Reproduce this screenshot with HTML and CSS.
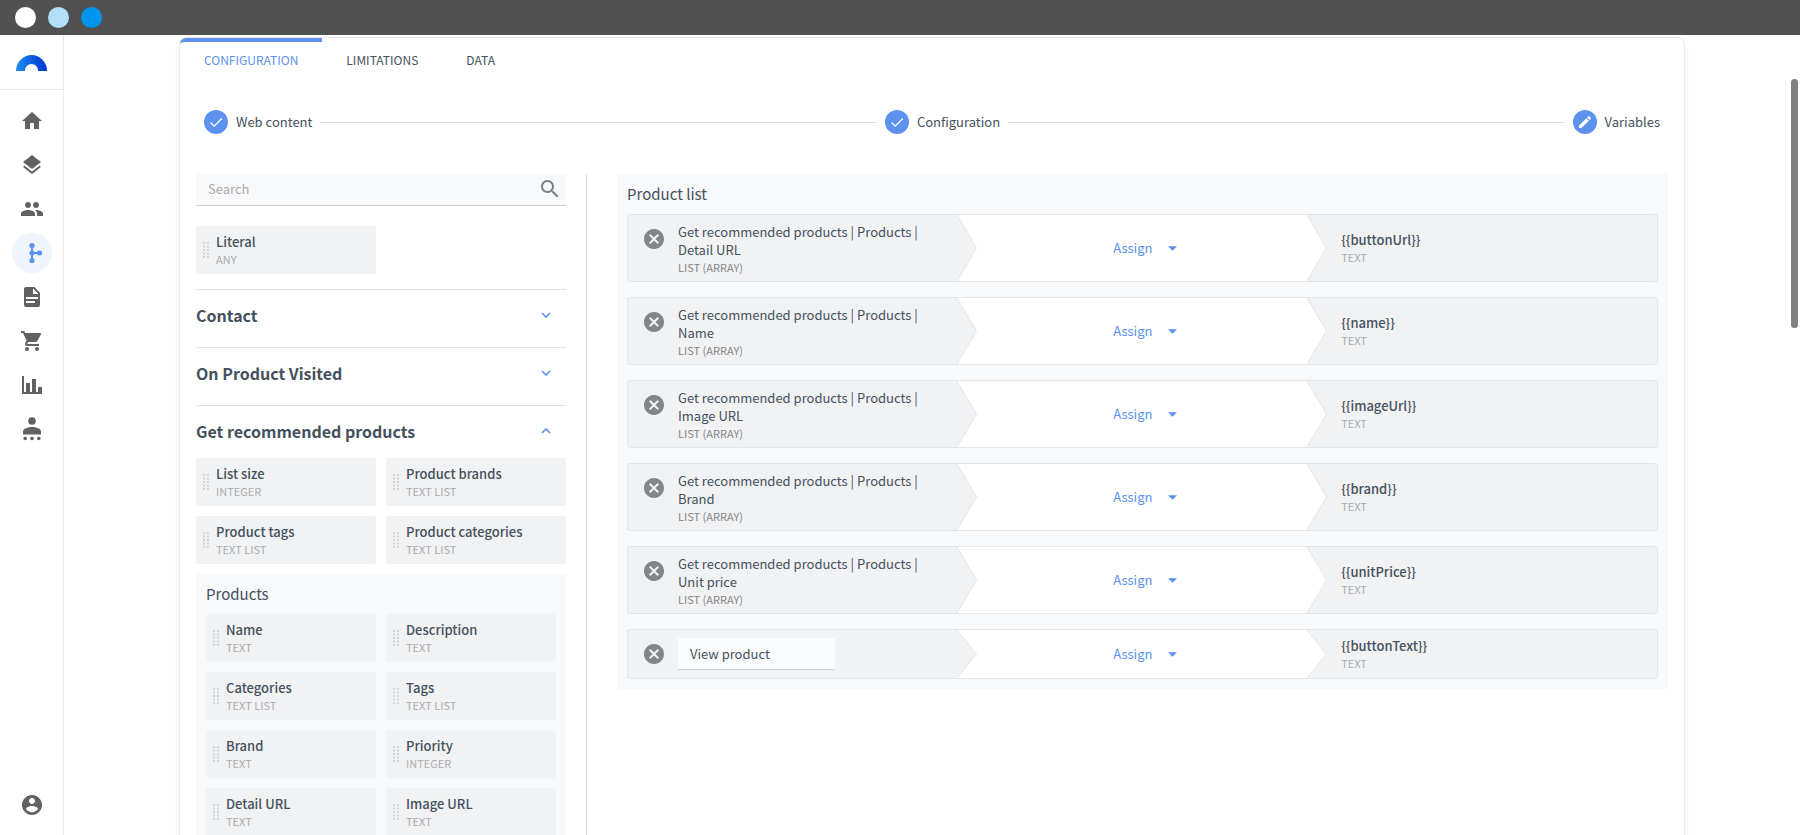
FILE: index.html
```html
<!DOCTYPE html>
<html lang="en">
<head>
    <meta charset="UTF-8">
    <meta name="viewport" content="width=device-width, initial-scale=1.0">
    <title>Configuration - Variables</title>
    <link rel="stylesheet" href="styles.css">
</head>
<body>
    <!-- shared icons -->
    <svg class="sprite" aria-hidden="true">
        <symbol id="grip" viewBox="0 0 6 16">
            <path d="M0 0h2v2H0zM4 0h2v2H4zM0 3.5h2v2H0zM4 3.5h2v2H4zM0 7h2v2H0zM4 7h2v2H4zM0 10.500h2v2H0zM4 10.500h2v2H4zM0 14h2v2H0zM4 14h2v2H4z"/>
        </symbol>
        <symbol id="remove" viewBox="2 2 20 20">
            <path d="M12 2C6.470 2 2 6.470 2 12s4.470 10 10 10 10-4.470 10-10S17.530 2 12 2zm5 13.590L15.590 17 12 13.410 8.410 17 7 15.590 10.590 12 7 8.410 8.410 7 12 10.590 15.590 7 17 8.410 13.410 12 17 15.590z"/>
        </symbol>
        <symbol id="check" viewBox="0 0 24 24">
            <path d="M6.500 12.500l3.700 3.700 7.600-7.700" fill="none" stroke="#fff" stroke-width="1.300"/>
        </symbol>
        <symbol id="arrow" viewBox="0 0 20 100" preserveAspectRatio="none">
            <path d="M0 0L19.500 50 0 100" stroke="#e3e5e7" vector-effect="non-scaling-stroke"/>
        </symbol>
        <symbol id="chevron" viewBox="0 0 10 6">
            <path d="M1 1l4 4 4-4" fill="none" stroke="#5c91ee" stroke-width="1.600"/>
        </symbol>
    </svg>

    <header class="topbar">
        <span class="dot dot-white"></span>
        <span class="dot dot-light"></span>
        <span class="dot dot-blue"></span>
    </header>

    <div class="app">
        <nav class="sidebar">
            <a href="#" class="logo" aria-label="Dashboard">
                <svg viewBox="0 0 31 16" width="31" height="16">
                    <defs>
                        <linearGradient id="logoFill">
                            <stop offset="0" stop-color="#1f8fe8"/>
                            <stop offset="0.750" stop-color="#0646dd"/>
                            <stop offset="1" stop-color="#0038dc"/>
                        </linearGradient>
                    </defs>
                    <path fill="url(#logoFill)" d="M0 16a15.500 16 0 0 1 31 0h-8.800a6.700 7 0 0 0-13.400 0z"/>
                </svg>
            </a>
            <div class="nav-items">
                <a href="#" class="nav-link" aria-label="Home"><svg viewBox="0 0 24 24"><path d="M10 20v-6h4v6h5v-8h3L12 3 2 12h3v8z"/></svg></a>
                <a href="#" class="nav-link" aria-label="Layers"><svg viewBox="0 0 24 24"><path d="M11.990 18.540l-7.370-5.730L3 14.070l9 7 9-7-1.630-1.270-7.380 5.740zM12 16l7.360-5.730L21 9l-9-7-9 7 1.630 1.270L12 16z"/></svg></a>
                <a href="#" class="nav-link" aria-label="Contacts"><svg viewBox="0 0 24 24"><path d="M16 11c1.660 0 2.990-1.340 2.990-3S17.660 5 16 5s-3 1.340-3 3 1.340 3 3 3zm-8 0c1.660 0 2.990-1.340 2.990-3S9.660 5 8 5 5 6.340 5 8s1.340 3 3 3zm0 2c-2.330 0-7 1.170-7 3.500V19h14v-2.500C15 14.170 10.330 13 8 13zm8 0c-.290 0-.620.020-.970.050C16.190 13.890 17 15.020 17 16.500V19h6v-2.500c0-2.330-4.670-3.500-7-3.500z"/></svg></a>
                <a href="#" class="nav-link active" aria-label="Workflows"><svg viewBox="0 0 24 24"><circle cx="12" cy="4.500" r="2.600"/><circle cx="12" cy="12" r="2.600"/><circle cx="12" cy="19.500" r="2.600"/><circle cx="19.500" cy="12" r="2.600"/><path d="M11 4h2v7h6v2h-6v7h-2z"/></svg></a>
                <a href="#" class="nav-link" aria-label="Templates"><svg viewBox="0 0 24 24"><path fill-rule="evenodd" d="M6 2h8.500L20 8v12a2 2 0 0 1-2 2H6a2 2 0 0 1-2-2V4a2 2 0 0 1 2-2zm7 1.500V9h5.500zM6 12v2h12v-2zm0 4v2h9v-2z"/></svg></a>
                <a href="#" class="nav-link" aria-label="Orders"><svg viewBox="0 0 24 24"><path d="M7 18c-1.100 0-1.990.900-1.990 2S5.900 22 7 22s2-.900 2-2-.900-2-2-2zM1 2v2h2l3.600 7.590-1.350 2.450c-.160.280-.250.610-.250.960 0 1.100.900 2 2 2h12v-2H7.420c-.140 0-.250-.110-.250-.250l.030-.120.900-1.630h7.450c.750 0 1.410-.410 1.750-1.030l3.580-6.490A1 1 0 0 0 20 4H5.210l-.940-2H1zm16 16c-1.100 0-1.990.900-1.990 2s.890 2 1.990 2 2-.900 2-2-.900-2-2-2z"/></svg></a>
                <a href="#" class="nav-link" aria-label="Reports"><svg viewBox="0 0 24 24"><path d="M2 3h2v16h2v-9h4v9h2V6h4v13h2v-5h4v7H2z"/></svg></a>
                <a href="#" class="nav-link" aria-label="Audience"><svg viewBox="0 0 24 24"><circle cx="12" cy="4" r="3.800"/><path d="M3 17.500v-2.800C3 11.500 8 10 12 10s9 1.500 9 4.700v2.800z"/><circle cx="5.200" cy="21.500" r="1.800"/><circle cx="12" cy="21.500" r="1.800"/><circle cx="18.800" cy="21.500" r="1.800"/></svg></a>
            </div>
            <a href="#" class="nav-link account" aria-label="Account"><svg viewBox="0 0 24 24"><path d="M12 2C6.480 2 2 6.480 2 12s4.480 10 10 10 10-4.480 10-10S17.520 2 12 2zm0 3c1.660 0 3 1.340 3 3s-1.340 3-3 3-3-1.340-3-3 1.340-3 3-3zm0 14.200c-2.500 0-4.710-1.280-6-3.220.030-1.990 4-3.080 6-3.080 1.990 0 5.970 1.090 6 3.080-1.290 1.940-3.500 3.220-6 3.220z"/></svg></a>
        </nav>

        <main class="main">
            <div class="card">
                <div class="tabs">
                    <a href="#" class="tab active">CONFIGURATION</a>
                    <a href="#" class="tab">LIMITATIONS</a>
                    <a href="#" class="tab">DATA</a>
                </div>

                <div class="stepper">
                    <div class="step">
                        <span class="step-icon"><svg><use href="#check"/></svg></span>
                        <span>Web content</span>
                    </div>
                    <div class="step-line"></div>
                    <div class="step">
                        <span class="step-icon"><svg><use href="#check"/></svg></span>
                        <span>Configuration</span>
                    </div>
                    <div class="step-line"></div>
                    <div class="step">
                        <span class="step-icon"><svg class="pencil" viewBox="0 0 24 24"><path d="M3 17.250V21h3.750L17.810 9.940l-3.750-3.750L3 17.250zM20.710 7.040c.390-.390.390-1.020 0-1.410l-2.340-2.340c-.390-.390-1.020-.390-1.410 0l-1.830 1.830 3.750 3.750 1.830-1.830z"/></svg></span>
                        <span>Variables</span>
                    </div>
                </div>

                <div class="content">
                    <aside class="sources">
                        <div class="search">
                            <input type="text" placeholder="Search" aria-label="Search">
                            <svg viewBox="0 0 24 24"><path d="M15.500 14h-.790l-.280-.270C15.410 12.590 16 11.110 16 9.500 16 5.910 13.090 3 9.500 3S3 5.910 3 9.500 5.910 16 9.500 16c1.610 0 3.090-.590 4.230-1.570l.270.280v.790l5 4.990L20.490 19l-4.990-5zm-6 0C7.010 14 5 11.990 5 9.500S7.010 5 9.500 5 14 7.010 14 9.500 11.990 14 9.500 14z"/></svg>
                        </div>

                        <div class="chips literal">
                            <div class="chip"><svg><use href="#grip"/></svg><div><strong>Literal</strong><small>ANY</small></div></div>
                        </div>

                        <section class="group">
                            <button type="button" class="group-header">Contact <svg><use href="#chevron"/></svg></button>
                        </section>
                        <section class="group">
                            <button type="button" class="group-header">On Product Visited <svg><use href="#chevron"/></svg></button>
                        </section>
                        <section class="group open">
                            <button type="button" class="group-header">Get recommended products <svg><use href="#chevron"/></svg></button>
                            <div class="chips">
                                <div class="chip"><svg><use href="#grip"/></svg><div><strong>List size</strong><small>INTEGER</small></div></div>
                                <div class="chip"><svg><use href="#grip"/></svg><div><strong>Product brands</strong><small>TEXT LIST</small></div></div>
                                <div class="chip"><svg><use href="#grip"/></svg><div><strong>Product tags</strong><small>TEXT LIST</small></div></div>
                                <div class="chip"><svg><use href="#grip"/></svg><div><strong>Product categories</strong><small>TEXT LIST</small></div></div>
                            </div>
                            <div class="subgroup">
                                <h3>Products</h3>
                                <div class="chips">
                                    <div class="chip"><svg><use href="#grip"/></svg><div><strong>Name</strong><small>TEXT</small></div></div>
                                    <div class="chip"><svg><use href="#grip"/></svg><div><strong>Description</strong><small>TEXT</small></div></div>
                                    <div class="chip"><svg><use href="#grip"/></svg><div><strong>Categories</strong><small>TEXT LIST</small></div></div>
                                    <div class="chip"><svg><use href="#grip"/></svg><div><strong>Tags</strong><small>TEXT LIST</small></div></div>
                                    <div class="chip"><svg><use href="#grip"/></svg><div><strong>Brand</strong><small>TEXT</small></div></div>
                                    <div class="chip"><svg><use href="#grip"/></svg><div><strong>Priority</strong><small>INTEGER</small></div></div>
                                    <div class="chip"><svg><use href="#grip"/></svg><div><strong>Detail URL</strong><small>TEXT</small></div></div>
                                    <div class="chip"><svg><use href="#grip"/></svg><div><strong>Image URL</strong><small>TEXT</small></div></div>
                                </div>
                            </div>
                        </section>
                    </aside>

                    <section class="panel">
                        <h3>Product list</h3>

                        <div class="row">
                            <div class="source">
                                <button type="button" class="remove" aria-label="Remove"><svg><use href="#remove"/></svg></button>
                                <div class="source-text">Get recommended products | Products | Detail URL<small>LIST (ARRAY)</small></div>
                            </div>
                            <div class="action">
                                <svg class="arrow"><use href="#arrow"/></svg>
                                <div class="assign">
                                    <select aria-label="Action for buttonUrl"><option>Assign</option></select>
                                    <svg viewBox="0 0 10 5"><path d="M0 0h10L5 5z"/></svg>
                                </div>
                            </div>
                            <div class="target">
                                <svg class="arrow"><use href="#arrow"/></svg>
                                <strong>{{buttonUrl}}</strong><small>TEXT</small>
                            </div>
                        </div>

                        <div class="row">
                            <div class="source">
                                <button type="button" class="remove" aria-label="Remove"><svg><use href="#remove"/></svg></button>
                                <div class="source-text">Get recommended products | Products | Name<small>LIST (ARRAY)</small></div>
                            </div>
                            <div class="action">
                                <svg class="arrow"><use href="#arrow"/></svg>
                                <div class="assign">
                                    <select aria-label="Action for name"><option>Assign</option></select>
                                    <svg viewBox="0 0 10 5"><path d="M0 0h10L5 5z"/></svg>
                                </div>
                            </div>
                            <div class="target">
                                <svg class="arrow"><use href="#arrow"/></svg>
                                <strong>{{name}}</strong><small>TEXT</small>
                            </div>
                        </div>

                        <div class="row">
                            <div class="source">
                                <button type="button" class="remove" aria-label="Remove"><svg><use href="#remove"/></svg></button>
                                <div class="source-text">Get recommended products | Products | Image URL<small>LIST (ARRAY)</small></div>
                            </div>
                            <div class="action">
                                <svg class="arrow"><use href="#arrow"/></svg>
                                <div class="assign">
                                    <select aria-label="Action for imageUrl"><option>Assign</option></select>
                                    <svg viewBox="0 0 10 5"><path d="M0 0h10L5 5z"/></svg>
                                </div>
                            </div>
                            <div class="target">
                                <svg class="arrow"><use href="#arrow"/></svg>
                                <strong>{{imageUrl}}</strong><small>TEXT</small>
                            </div>
                        </div>

                        <div class="row">
                            <div class="source">
                                <button type="button" class="remove" aria-label="Remove"><svg><use href="#remove"/></svg></button>
                                <div class="source-text">Get recommended products | Products | Brand<small>LIST (ARRAY)</small></div>
                            </div>
                            <div class="action">
                                <svg class="arrow"><use href="#arrow"/></svg>
                                <div class="assign">
                                    <select aria-label="Action for brand"><option>Assign</option></select>
                                    <svg viewBox="0 0 10 5"><path d="M0 0h10L5 5z"/></svg>
                                </div>
                            </div>
                            <div class="target">
                                <svg class="arrow"><use href="#arrow"/></svg>
                                <strong>{{brand}}</strong><small>TEXT</small>
                            </div>
                        </div>

                        <div class="row">
                            <div class="source">
                                <button type="button" class="remove" aria-label="Remove"><svg><use href="#remove"/></svg></button>
                                <div class="source-text">Get recommended products | Products | Unit price<small>LIST (ARRAY)</small></div>
                            </div>
                            <div class="action">
                                <svg class="arrow"><use href="#arrow"/></svg>
                                <div class="assign">
                                    <select aria-label="Action for unitPrice"><option>Assign</option></select>
                                    <svg viewBox="0 0 10 5"><path d="M0 0h10L5 5z"/></svg>
                                </div>
                            </div>
                            <div class="target">
                                <svg class="arrow"><use href="#arrow"/></svg>
                                <strong>{{unitPrice}}</strong><small>TEXT</small>
                            </div>
                        </div>

                        <div class="row">
                            <div class="source">
                                <button type="button" class="remove" aria-label="Remove"><svg><use href="#remove"/></svg></button>
                                <input type="text" class="literal-value" value="View product" aria-label="Literal value">
                            </div>
                            <div class="action">
                                <svg class="arrow"><use href="#arrow"/></svg>
                                <div class="assign">
                                    <select aria-label="Action for buttonText"><option>Assign</option></select>
                                    <svg viewBox="0 0 10 5"><path d="M0 0h10L5 5z"/></svg>
                                </div>
                            </div>
                            <div class="target">
                                <svg class="arrow"><use href="#arrow"/></svg>
                                <strong>{{buttonText}}</strong><small>TEXT</small>
                            </div>
                        </div>
                    </section>
                </div>
            </div>
            <div class="scroll-thumb"></div>
        </main>
    </div>
</body>
</html>
```

FILE: styles.css
```css
* {
    box-sizing: border-box;
}

body {
    margin: 0;
    height: 100vh;
    display: flex;
    flex-direction: column;
    overflow: hidden;
    background-color: #fff;
    color: #44515c;
    font-family: "Source Sans Pro", "Noto Sans CJK SC", sans-serif;
    font-size: 13px;
    line-height: 18px;
}

a {
    color: inherit;
    text-decoration: none;
}

button, input, select {
    font: inherit;
    color: inherit;
    border: none;
    background: none;
    padding: 0;
    margin: 0;
    outline: none;
}

button, select {
    cursor: pointer;
}

svg {
    display: block;
    flex: none;
}

strong {
    display: block;
    font-weight: 500;
}

small {
    display: block;
    font-size: 11px;
    line-height: 16px;
    color: #a9abad;
}

h3 {
    margin: 0;
    font-size: 15px;
    font-weight: 400;
    line-height: 20px;
}

.sprite {
    position: absolute;
    width: 0;
    height: 0;
}

/* Top bar */
.topbar {
    flex: none;
    display: flex;
    align-items: center;
    gap: 12px;
    height: 35px;
    padding: 0 15px;
    background-color: #515151;
}

.dot {
    width: 21px;
    height: 21px;
    border-radius: 50%;
}

.dot-white {
    background-color: #fff;
}

.dot-light {
    background-color: #b3dff9;
}

.dot-blue {
    background-color: #0095ec;
}

.app {
    flex: 1;
    display: flex;
    min-height: 0;
}

/* Sidebar */
.sidebar {
    flex: none;
    display: flex;
    flex-direction: column;
    width: 64px;
    border-right: 1px solid #eaeaea;
}

.logo {
    display: flex;
    justify-content: center;
    padding: 20px 0 18px;
    border-bottom: 1px solid #eaeaea;
}

.nav-items {
    flex: 1;
    display: flex;
    flex-direction: column;
    gap: 4px;
    padding-top: 11px;
}

.nav-link {
    display: flex;
    align-items: center;
    justify-content: center;
    align-self: center;
    width: 40px;
    height: 40px;
    border-radius: 50%;
    fill: #616161;
}

.nav-link svg {
    width: 24px;
    height: 24px;
}

.nav-link.active {
    background-color: #eff4fd;
    fill: #5c91ee;
}

.account {
    margin-bottom: 10px;
}

/* Main card */
.main {
    position: relative;
    flex: 1;
    min-width: 0;
    padding: 2px 115px 0;
    overflow: hidden;
}

.card {
    min-height: 100%;
    border: 1px solid #e9eaeb;
    border-radius: 8px 8px 0 0;
    box-shadow: 0 2px 8px rgba(0, 0, 0, 0.04);
}

.scroll-thumb {
    position: absolute;
    top: 44px;
    right: 2px;
    width: 7px;
    height: 249px;
    border-radius: 4px;
    background-color: #808080;
}

.tabs {
    display: flex;
}

.tab {
    padding: 9px 24px;
    border-top: 4px solid transparent;
    font-size: 12px;
}

.tab.active {
    border-top-color: #5c91ee;
    border-radius: 6px 0 4px 0;
    color: #5c91ee;
}

.stepper {
    display: flex;
    align-items: center;
    gap: 8px;
    padding: 32px 24px 40px;
}

.step {
    display: flex;
    align-items: center;
    gap: 8px;
}

.step-icon {
    display: flex;
    align-items: center;
    justify-content: center;
    width: 24px;
    height: 24px;
    border-radius: 50%;
    background-color: #5c91ee;
}

.step-icon svg {
    width: 24px;
    height: 24px;
}

.step-icon .pencil {
    width: 16px;
    height: 16px;
    fill: #fff;
}

.step-line {
    flex: 1;
    height: 1px;
    background-color: #dcdedf;
}

.content {
    display: grid;
    grid-template-columns: 391px 1fr;
    align-items: start;
    gap: 30px;
    padding: 0 16px;
}

/* Variable sources */
.sources {
    padding-right: 20px;
    border-right: 1px solid #dcdedf;
}

.search {
    display: flex;
    align-items: center;
    height: 32px;
    padding: 0 4px 2px 12px;
    border-bottom: 1px solid #cdd1d4;
    background-color: #f8f9fb;
}

.search input {
    flex: 1;
    min-width: 0;
}

.search input::placeholder {
    color: #a9abad;
}

.search svg {
    width: 24px;
    height: 24px;
    fill: #7f8081;
}

.chips {
    display: grid;
    grid-template-columns: 1fr 1fr;
    gap: 10px;
}

.literal {
    padding: 20px 0 15px;
}

.chip {
    display: flex;
    align-items: center;
    gap: 7px;
    height: 48px;
    padding-left: 7px;
    border-radius: 2px;
    background-color: #f1f2f4;
}

.chip svg {
    width: 6px;
    height: 16px;
    fill: #d2d5d8;
}

.group {
    padding-bottom: 5px;
    border-top: 1px solid #e1e3e4;
}

.group-header {
    display: flex;
    align-items: center;
    justify-content: space-between;
    width: 100%;
    padding: 13px 15px 15px 0;
    font-size: 16px;
    font-weight: 700;
    line-height: 24px;
}

.group-header svg {
    width: 10px;
    height: 6px;
}

.open .group-header svg {
    transform: rotate(180deg);
}

.subgroup {
    margin-top: 10px;
    padding: 10px;
    background-color: #f8f9fb;
}

.subgroup h3 {
    margin-bottom: 10px;
}

/* Mapping panel */
.panel {
    display: flex;
    flex-direction: column;
    gap: 15px;
    padding: 10px;
    background-color: #f8f9fb;
}

.panel h3 {
    margin-bottom: -5px;
}

.row {
    display: grid;
    grid-template-columns: 32% 34% 34%;
    border: 1px solid #e3e5e7;
    border-radius: 3px;
    background-color: #f1f2f4;
}

.source {
    display: flex;
    align-items: flex-start;
    gap: 14px;
    padding: 8px 16px 6px;
}

.source:has(input) {
    padding-bottom: 8px;
}

.source small {
    color: #868686;
}

.source-text {
    flex: 1;
}

.remove {
    margin-top: 6px;
}

.remove svg {
    width: 20px;
    height: 20px;
    fill: #838687;
}

.literal-value {
    width: 157px;
    height: 32px;
    padding: 0 12px;
    border-bottom: 1px solid #cdd1d4;
    background-color: #fafbfc;
}

.action, .target {
    position: relative;
    display: flex;
    flex-direction: column;
    justify-content: center;
}

.action {
    align-items: center;
    background-color: #fff;
}

.target {
    padding-left: 34px;
}

.arrow {
    position: absolute;
    top: 0;
    left: 0;
    width: 20px;
    height: 100%;
    fill: #f1f2f4;
}

.target .arrow {
    fill: #fff;
}

.assign {
    position: relative;
    color: #5c91ee;
}

.assign select {
    appearance: none;
    width: 90px;
    padding-left: 26px;
}

.assign svg {
    position: absolute;
    top: 7px;
    right: 0;
    width: 9px;
    height: 5px;
    fill: currentColor;
    pointer-events: none;
}
```
